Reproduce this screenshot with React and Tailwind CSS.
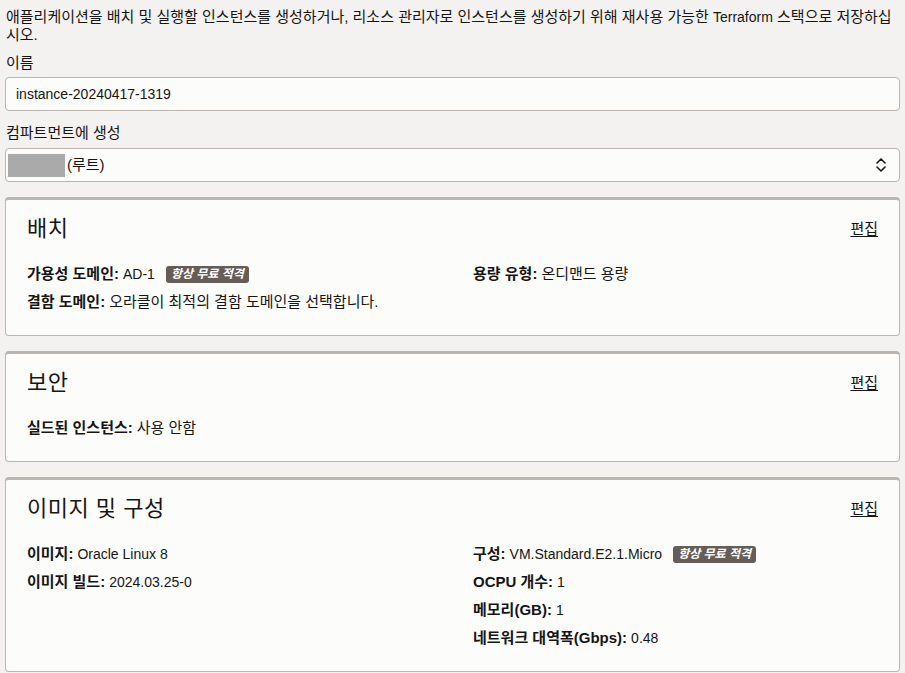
const font = {
  fontFamily: '"Liberation Sans", "Noto Sans CJK KR", sans-serif',
};

// Korean glyphs in Noto run narrower than the reference's, so they get a touch more size
const ko = 'text-[15px]';

const FreeBadge = () => (
  <span className="ml-[11px] inline-flex h-[17px] items-center rounded-[3px] bg-[#655e58] px-[5px] text-[12px] font-bold italic leading-none text-white">
    항상 무료 적격
  </span>
);

const Row = ({ label, value, badge, latin }) => (
  <div className="flex h-[28px] items-center whitespace-nowrap text-[14px]">
    <span className={`font-bold ${ko}`}>{label}:</span>
    <span className={`ml-[4px] ${latin ? 'text-[14px]' : ko}`}>{value}</span>
    {badge && <FreeBadge />}
  </div>
);

const Card = ({ title, left, right }) => (
  <div className="rounded-[4px] border border-t-[3px] border-[#bab5ae] bg-[#fcfcfb] px-[21px] pb-[19px] pt-[15px]">
    <div className="flex h-[28px] items-center justify-between">
      <h2 className="text-[22px] font-normal leading-none tracking-[0.5px]">{title}</h2>
      <a href="#" className={`${ko} underline underline-offset-2`}>
        편집
      </a>
    </div>
    <div className="mt-[17px] grid grid-cols-[446px_1fr]">
      <div>
        {left.map((r) => (
          <Row key={r.label} {...r} />
        ))}
      </div>
      <div>
        {right.map((r) => (
          <Row key={r.label} {...r} />
        ))}
      </div>
    </div>
  </div>
);

const ChevronUpDown = () => (
  <svg width="12" height="16" viewBox="0 0 12 16" fill="none" stroke="#161513" strokeWidth="1.6" strokeLinecap="round" strokeLinejoin="round">
    <path d="M2 6 L6 2 L10 6" />
    <path d="M2 10 L6 14 L10 10" />
  </svg>
);

export default function App() {
  return (
    <div style={font} className="min-h-screen bg-[#f3f2f1] px-[5px] pt-[8px] text-[#161513]">
      <p className={`break-all pl-[1px] leading-[18px] ${ko}`}>
        애플리케이션을 배치 및 실행할 인스턴스를 생성하거나, 리소스 관리자로 인스턴스를 생성하기 위해 재사용 가능한 <span className="text-[14px]">Terraform</span> 스택으로 저장하십시오.
      </p>

      <label className={`mt-[10px] block pl-[1px] leading-[18px] ${ko}`}>이름</label>
      <div className="mt-[5px] flex h-[34px] items-center rounded-[4px] border border-[#bab5ae] bg-[#fcfcfb] px-[10px] text-[14px]">
        instance-20240417-1319
      </div>

      <label className={`mt-[13px] block pl-[1px] leading-[18px] ${ko}`}>컴파트먼트에 생성</label>
      <div className="mt-[6px] flex h-[34px] items-center justify-between rounded-[4px] border border-[#bab5ae] bg-[#fcfcfb] pl-[2px] pr-[12px]">
        <div className="flex items-center">
          <span className="inline-block h-[23px] w-[57px] bg-[#aaaaaa]" />
          <span className={`ml-[2px] ${ko}`}>(루트)</span>
        </div>
        <ChevronUpDown />
      </div>

      <div className="mt-[15px] flex flex-col gap-[15px]">
        <Card
          title="배치"
          left={[
            { label: '가용성 도메인', value: 'AD-1', badge: true, latin: true },
            { label: '결함 도메인', value: '오라클이 최적의 결함 도메인을 선택합니다.' },
          ]}
          right={[{ label: '용량 유형', value: '온디맨드 용량' }]}
        />
        <Card
          title="보안"
          left={[{ label: '실드된 인스턴스', value: '사용 안함' }]}
          right={[]}
        />
        <Card
          title="이미지 및 구성"
          left={[
            { label: '이미지', value: 'Oracle Linux 8', latin: true },
            { label: '이미지 빌드', value: '2024.03.25-0', latin: true },
          ]}
          right={[
            { label: '구성', value: 'VM.Standard.E2.1.Micro', badge: true, latin: true },
            { label: 'OCPU 개수', value: '1', latin: true },
            { label: '메모리(GB)', value: '1', latin: true },
            { label: '네트워크 대역폭(Gbps)', value: '0.48', latin: true },
          ]}
        />
      </div>
    </div>
  );
}
